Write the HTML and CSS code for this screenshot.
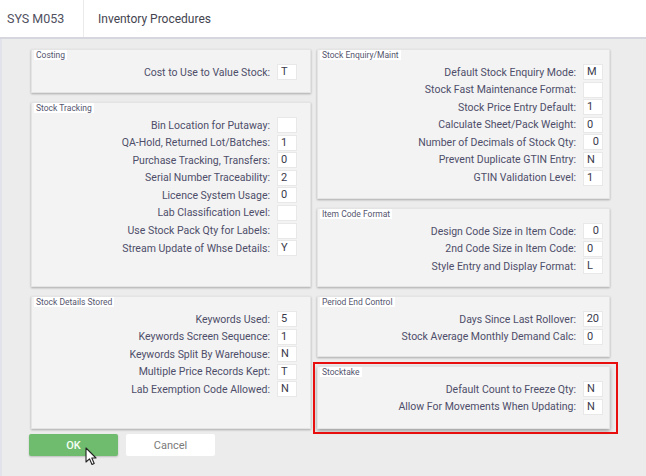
FILE: index.html
```html
<!DOCTYPE html>
<html>
<head>
<meta charset="utf-8">
<link rel="stylesheet" href="styles.css">
</head>
<body>
<div class="app">
  <header class="topbar">
    <div class="tab-code">SYS M053</div>
    <div class="tab-title">Inventory Procedures</div>
  </header>
  <main class="content">
    <div class="columns">
      <div class="col col-left">
        <section class="panel h-costing">
          <span class="ptitle">Costing</span>
          <div class="rows">
            <div class="row"><span class="lbl">Cost to Use to Value Stock:</span><span class="fld">T</span></div>
          </div>
        </section>
        <section class="panel h-tracking">
          <span class="ptitle">Stock Tracking</span>
          <div class="rows">
            <div class="row"><span class="lbl">Bin Location for Putaway:</span><span class="fld"></span></div>
            <div class="row"><span class="lbl">QA-Hold, Returned Lot/Batches:</span><span class="fld">1</span></div>
            <div class="row"><span class="lbl">Purchase Tracking, Transfers:</span><span class="fld">0</span></div>
            <div class="row"><span class="lbl">Serial Number Traceability:</span><span class="fld">2</span></div>
            <div class="row"><span class="lbl">Licence System Usage:</span><span class="fld">0</span></div>
            <div class="row"><span class="lbl">Lab Classification Level:</span><span class="fld"></span></div>
            <div class="row"><span class="lbl">Use Stock Pack Qty for Labels:</span><span class="fld"></span></div>
            <div class="row"><span class="lbl">Stream Update of Whse Details:</span><span class="fld">Y</span></div>
          </div>
        </section>
        <section class="panel h-details">
          <span class="ptitle">Stock Details Stored</span>
          <div class="rows">
            <div class="row"><span class="lbl">Keywords Used:</span><span class="fld">5</span></div>
            <div class="row"><span class="lbl">Keywords Screen Sequence:</span><span class="fld">1</span></div>
            <div class="row"><span class="lbl">Keywords Split By Warehouse:</span><span class="fld">N</span></div>
            <div class="row"><span class="lbl">Multiple Price Records Kept:</span><span class="fld">T</span></div>
            <div class="row"><span class="lbl">Lab Exemption Code Allowed:</span><span class="fld">N</span></div>
          </div>
        </section>
      </div>
      <div class="col col-right">
        <section class="panel h-enquiry">
          <span class="ptitle">Stock Enquiry/Maint</span>
          <div class="rows">
            <div class="row"><span class="lbl">Default Stock Enquiry Mode:</span><span class="fld">M</span></div>
            <div class="row"><span class="lbl">Stock Fast Maintenance Format:</span><span class="fld"></span></div>
            <div class="row"><span class="lbl">Stock Price Entry Default:</span><span class="fld">1</span></div>
            <div class="row"><span class="lbl">Calculate Sheet/Pack Weight:</span><span class="fld">0</span></div>
            <div class="row"><span class="lbl">Number of Decimals of Stock Qty:</span><span class="fld num">0</span></div>
            <div class="row"><span class="lbl">Prevent Duplicate GTIN Entry:</span><span class="fld">N</span></div>
            <div class="row"><span class="lbl">GTIN Validation Level:</span><span class="fld">1</span></div>
          </div>
        </section>
        <section class="panel h-itemcode">
          <span class="ptitle">Item Code Format</span>
          <div class="rows">
            <div class="row"><span class="lbl">Design Code Size in Item Code:</span><span class="fld num">0</span></div>
            <div class="row"><span class="lbl">2nd Code Size in Item Code:</span><span class="fld">0</span></div>
            <div class="row"><span class="lbl">Style Entry and Display Format:</span><span class="fld">L</span></div>
          </div>
        </section>
        <section class="panel h-period">
          <span class="ptitle">Period End Control</span>
          <div class="rows">
            <div class="row"><span class="lbl">Days Since Last Rollover:</span><span class="fld num">20</span></div>
            <div class="row"><span class="lbl">Stock Average Monthly Demand Calc:</span><span class="fld">0</span></div>
          </div>
        </section>
        <section class="panel h-stocktake highlighted">
          <span class="ptitle">Stocktake</span>
          <div class="rows">
            <div class="row"><span class="lbl">Default Count to Freeze Qty:</span><span class="fld">N</span></div>
            <div class="row"><span class="lbl">Allow For Movements When Updating:</span><span class="fld">N</span></div>
          </div>
        </section>
      </div>
    </div>
    <div class="actions">
      <button class="btn btn-ok">OK
        <svg class="cursor" width="12" height="19" viewBox="0 0 12 19"><path d="M1 1 L1 15 L4.5 11.8 L7 17.5 L9.2 16.5 L6.8 11 L11 11 Z" fill="#fff" stroke="#222" stroke-width="1.1" stroke-linejoin="round"/></svg>
      </button>
      <button class="btn btn-cancel">Cancel</button>
    </div>
  </main>
</div>
</body>
</html>
```

FILE: styles.css
```css
* { box-sizing: border-box; }
html, body { margin: 0; padding: 0; }
body {
  width: 646px;
  height: 476px;
  overflow: hidden;
  background: #ececec;
  font-family: Roboto, "Liberation Sans", sans-serif;
}
.app { width: 646px; height: 476px; display: flex; flex-direction: column; }
.topbar {
  height: 39px;
  background: #fff;
  border-bottom: 2px solid #d6d6de;
  display: flex;
  align-items: stretch;
}
.tab-code {
  width: 84px;
  padding-left: 7px;
  border-right: 1px solid #ebebeb;
  display: flex;
  align-items: center;
  font-size: 12.5px;
  color: #505060;
}
.tab-title {
  padding-left: 14px;
  display: flex;
  align-items: center;
  font-size: 12px;
  color: #444450;
}
.content {
  flex: 1;
  padding: 10px 0 0 31px;
  border-left: 2px solid #e2e2ea;
}
.columns { display: flex; gap: 6px; }
.col { display: flex; flex-direction: column; gap: 9px; }
.col-left { width: 280px; margin-left: -2px; }
.col-right { width: 293px; }
.panel {
  position: relative;
  background: #f3f3f3;
  border: 1px solid #e4e4e4;
  box-shadow: 0 1px 2px rgba(0,0,0,0.28);
  display: flex;
  flex-direction: column;
  align-items: stretch;
}
.ptitle {
  align-self: flex-start;
  margin-left: 2px;
  padding: 0 2px;
  background: #fff;
  font-size: 8.5px;
  line-height: 10px;
  height: 10px;
  color: #55556e;
}
.rows {
  display: flex;
  flex-direction: column;
  gap: 1.6px;
  margin-top: 4px;
}
.col-left .rows { padding-right: 13px; }
.col-right .rows { padding-right: 6px; }
.row {
  display: flex;
  justify-content: flex-end;
  align-items: center;
  height: 16px;
  gap: 7px;
}
.lbl {
  font-size: 10.5px;
  color: #4e4e6a;
  white-space: nowrap;
}
.fld {
  width: 20px;
  height: 16px;
  background: #fff;
  border: 1px solid #e8e8e8;
  font-size: 11px;
  line-height: 14px;
  padding-left: 3px;
  color: #3a3a4a;
}
.fld.num { text-align: right; padding-left: 0; padding-right: 3px; }
.h-costing { height: 44px; }
.h-tracking { height: 185px; }
.h-details { height: 133px; }
.h-enquiry { height: 150px; }
.h-itemcode { height: 79px; }
.h-period { height: 61px; }
.h-stocktake { height: 63px; box-shadow: 0 2px 4px rgba(0,0,0,0.35); }
.highlighted::after {
  content: "";
  position: absolute;
  left: -5px;
  top: -5px;
  right: -9px;
  bottom: -6px;
  border: 2px solid #e80e0e;
  pointer-events: none;
}
.actions {
  display: flex;
  gap: 8px;
  margin-top: 5px;
  margin-left: -4px;
}
.btn {
  position: relative;
  width: 89px;
  height: 22px;
  border: none;
  border-radius: 2px;
  font-family: Roboto, "Liberation Sans", sans-serif;
  font-size: 11px;
  padding: 0;
}
.btn-ok {
  background: #6fbc6f;
  color: #f4fff4;
  font-weight: 500;
  box-shadow: 0 1px 2px rgba(0,0,0,0.2);
}
.btn-cancel {
  background: #fff;
  color: #7a7a7a;
}
.cursor {
  position: absolute;
  left: 56px;
  top: 13px;
}
```
